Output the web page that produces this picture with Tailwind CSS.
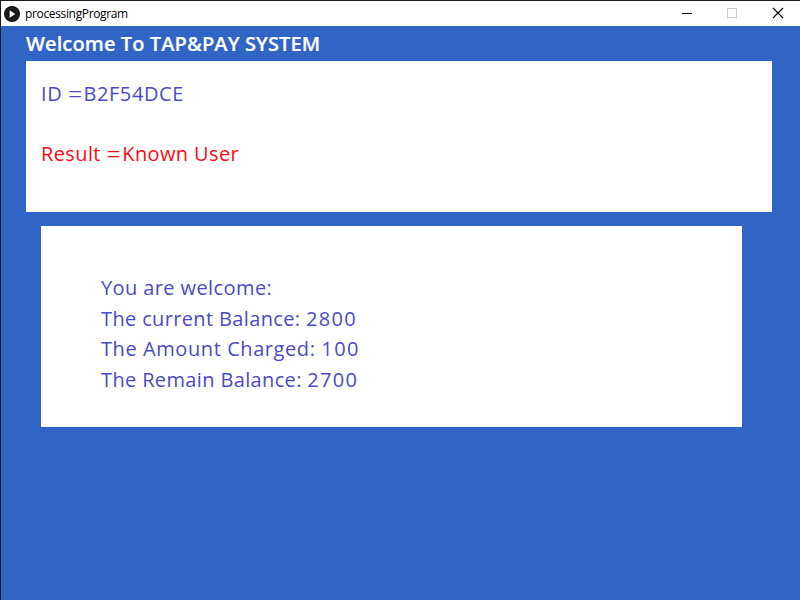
<!DOCTYPE html>
<html lang="en">
<head>
<meta charset="utf-8">
<title>processingProgram</title>
<script src="https://cdn.jsdelivr.net/npm/@tailwindcss/browser@4"></script>
</head>
<body class="overflow-hidden">
<div class="w-[800px] h-[600px] flex flex-col bg-[#3165c5] border-t border-l border-[#1c1a1d] font-['Open_Sans',sans-serif] whitespace-nowrap">
  <header class="h-[25px] shrink-0 bg-white flex items-center">
    <svg class="ml-[3px] w-4 h-4" viewBox="0 0 16 16"><circle cx="8" cy="8" r="8" fill="#151515"/><circle cx="8" cy="8" r="5.5" fill="none" stroke="#2b2b2b"/><path d="M5.6 4.2 11.4 8 5.6 11.8Z" fill="#fff"/></svg>
    <h1 class="ml-[5px] h-[24px] text-[12px] leading-[24px] tracking-[-0.35px] text-black"><span>processingProgram</span></h1>
    <svg class="ml-auto w-[140px] h-[25px]" viewBox="0 0 140 25" fill="none" shape-rendering="crispEdges"><path d="M22 12.5H32" stroke="#000"/><path d="M67.5 7.5H76.5V16.5H67.5Z" stroke="#ccc"/><path d="M113 7 123 17M123 7 113 17" stroke="#000" stroke-width="1.1" shape-rendering="auto"/></svg>
  </header>
  <main class="flex flex-col">
    <h2 class="ml-[25px] h-[35px] pt-[3px] text-[20px] leading-[30px] tracking-[0.11px] font-semibold text-white [-webkit-text-stroke:0.2px_white]"><span>Welcome To TAP&amp;PAY SYSTEM</span></h2>
    <section class="ml-[25px] w-[746px] h-[151px] bg-white pl-[15px] pt-[18px] text-[20px] leading-[30px]">
      <p class="text-[#4b4bc5] h-[30px] mb-[30px] tracking-[0.6px]"><span>ID <span class="text-[25px] leading-none align-[-2px] font-light tracking-[1px]">=</span>B2F54DCE</span></p>
      <p class="text-[#ff0a14] tracking-[0.38px]"><span>Result <span class="text-[25px] leading-none align-[-2px] font-light tracking-[1.6px]">=</span>Known User</span></p>
    </section>
    <section class="mt-[14px] ml-[40px] w-[701px] h-[201px] bg-white pl-[60px] pt-[47px] text-[20px] leading-[30.6px] text-[#4b4bc5]">
      <p class="tracking-[0.4px]"><span>You are welcome:</span></p>
      <p class="tracking-[0.36px]"><span>The current Balance: <span class="tracking-[1.3px]">2800</span></span></p>
      <p class="tracking-[0.58px]"><span>The Amount Charged: <span class="tracking-[1.4px]">100</span></span></p>
      <p class="tracking-[0.36px]"><span>The Remain Balance: <span class="tracking-[1.3px]">2700</span></span></p>
    </section>
  </main>
</div>
</body>
</html>
